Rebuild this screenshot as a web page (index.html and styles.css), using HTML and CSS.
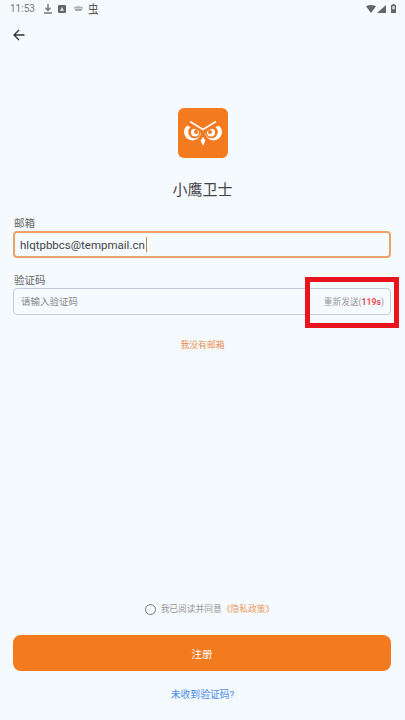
FILE: index.html
```html
<!DOCTYPE html>
<html lang="zh">
<head>
<meta charset="utf-8">
<title>小鹰卫士</title>
<link rel="stylesheet" href="styles.css">
</head>
<body>
<div class="screen">
  <div class="status">
    <span class="time">11:53</span>
    <svg class="si-dl" width="8" height="10" viewBox="0 0 8 10"><path d="M4 0v6M1.500 3.800L4 6.400 6.500 3.800M0 9h8" fill="none" stroke="#777" stroke-width="1.400"/></svg>
    <svg class="si-a" width="8" height="8" viewBox="0 0 8 8"><rect width="8" height="8" rx="1.200" fill="#666"/><path d="M4 1.800L6 6H2z" fill="#ddd"/></svg>
    <svg class="si-c" width="9" height="5" viewBox="0 0 9 5"><path d="M0 1.200Q4.500-.6 9 1.200L7.500 5h-6z" fill="#aaa"/><path d="M1 2.300h7" stroke="#eee" stroke-width=".7"/></svg>
    <span class="bug">虫</span>
    <span class="grow"></span>
    <svg class="si-w" width="10" height="8" viewBox="0 0 10 8"><path d="M0 1.200Q5-1.200 10 1.200L5 8z" fill="#666"/></svg>
    <svg class="si-s" width="9" height="8" viewBox="0 0 9 8"><path d="M9 0v8H0z" fill="#666"/></svg>
    <svg class="si-b" width="5" height="9" viewBox="0 0 5 9"><path d="M1.500 0h2v1H5v8H0V1h1.500z" fill="#666"/><rect x="1.200" y="2.200" width="2.600" height="3" fill="#ddd"/></svg>
  </div>
  <div class="nav">
    <svg width="12" height="12" viewBox="0 0 12 12"><path d="M11.500 6H1M6 1L1 6l5 5" fill="none" stroke="#333" stroke-width="1.300"/></svg>
  </div>
  <div class="brand">
    <div class="logo">
      <svg width="38" height="25" viewBox="0 0 38 25">
        <circle cx="8.500" cy="11" r="8.500" fill="#fff"/>
        <circle cx="29.500" cy="11" r="8.500" fill="#fff"/>
        <circle cx="10.500" cy="11" r="6.300" fill="#f47a1f"/>
        <circle cx="27.500" cy="11" r="6.300" fill="#f47a1f"/>
        <circle cx="11" cy="11.500" r="4" fill="#fff"/>
        <circle cx="27" cy="11.500" r="4" fill="#fff"/>
        <circle cx="12" cy="11" r="2" fill="#f47a1f"/>
        <circle cx="26" cy="11" r="2" fill="#f47a1f"/>
        <path d="M0 0h38v3L19 12 0 3z" fill="#f47a1f"/>
        <path d="M6 0.500L19 8.500 32 0.500" fill="none" stroke="#fff" stroke-width="1.600"/>
        <path d="M19 16l2.400 3.500L19 25l-2.400-5.500z" fill="#fff"/>
      </svg>
    </div>
    <h1 class="title">小鹰卫士</h1>
  </div>
  <form class="form">
    <div class="field">
      <div class="label">邮箱</div>
      <div class="box box-active"><span class="value">hlqtpbbcs@tempmail.cn</span><span class="caret"></span></div>
    </div>
    <div class="field field-code">
      <div class="label">验证码</div>
      <div class="box">
        <span class="placeholder">请输入验证码</span>
        <span class="resend">重新发送(<b class="count">119s</b>)</span>
      </div>
    </div>
  </form>
  <div class="no-mail">我没有邮箱</div>
  <div class="grow"></div>
  <div class="agree"><span class="radio"></span><span>我已阅读并同意</span><span class="policy">《隐私政策》</span></div>
  <button class="submit" type="button">注册</button>
  <div class="help">未收到验证码?</div>
  <div class="mark"></div>
</div>
</body>
</html>
```
FILE: styles.css
```css
* { box-sizing: border-box; }
html, body { margin: 0; padding: 0; }
body { background: #f5faff; font-family: Roboto, "Noto Sans CJK SC", sans-serif; }
.screen { position: relative; width: 405px; height: 720px; display: flex; flex-direction: column; overflow: hidden; }
.grow { flex: 1; }
.status { height: 17px; padding: 0 9px 0 10px; display: flex; align-items: center; }
.status svg { flex: none; }
.time { font-size: 10px; color: #777; }
.si-dl { margin-left: 9px; }
.si-a { margin-left: 6px; }
.si-c { margin-left: 8px; }
.bug { font-size: 10.500px; color: #555; margin-left: 5px; transform: scaleY(1.150); }
.si-s { margin-left: 1px; }
.si-b { margin-left: 5px; }
.nav { height: 36px; padding: 12px 0 0 13px; }
.nav svg { display: block; }
.brand { margin-top: 55px; display: flex; flex-direction: column; align-items: center; }
.logo { width: 50px; height: 50px; border-radius: 6px; background: #f47a1f; display: flex; align-items: center; justify-content: center; }
.title { margin: 22px 0 0; font-size: 15px; line-height: 20px; font-weight: 400; color: #444; }
.form { padding: 0 14px 0 13px; margin-top: 16px; }
.label { font-size: 10.500px; line-height: 15px; color: #666; padding-left: 1px; }
.box { height: 27px; border: 1px solid #c3ccd6; border-radius: 4px; padding: 0 7px; display: flex; align-items: center; }
.box-active { border: 2px solid #eba368; padding: 0 5px; }
.field-code { margin-top: 15px; }
.value { font-size: 11.500px; color: #444; }
.caret { width: 1px; height: 15px; background: #c98240; margin-left: 1px; }
.placeholder { flex: 1; font-size: 9.500px; color: #888; position: relative; top: -1px; }
.resend { font-size: 8.700px; color: #999; margin-right: -1px; }
.count { color: #e8505b; font-weight: 700; }
.no-mail { margin-top: 23px; text-align: center; font-size: 8.800px; line-height: 14px; color: #ea8f4e; }
.agree { display: flex; align-items: center; justify-content: center; font-size: 8.750px; line-height: 14px; color: #999; padding-left: 14px; }
.radio { width: 11px; height: 11px; border: 1.200px solid #777; border-radius: 50%; margin-right: 5px; }
.policy { color: #ea9a5c; }
.submit { margin: 19px 14px 0 13px; height: 36px; border: 0; border-radius: 8px; background: #f47a1f; color: #fff; font: inherit; font-size: 10.500px; }
.help { margin: 17px 0 18px; text-align: center; font-size: 9.800px; line-height: 14px; color: #4a8ae8; }
.mark { position: absolute; left: 305px; top: 277px; width: 94px; height: 51px; border: 5px solid #e8141e; }
```
